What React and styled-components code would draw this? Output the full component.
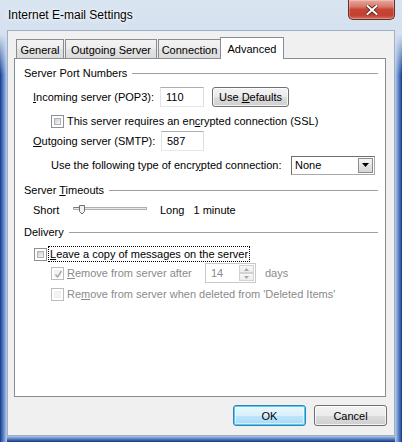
import React from 'react';
import styled, { createGlobalStyle, css } from 'styled-components';

const GlobalStyle = createGlobalStyle`
  html, body { margin: 0; padding: 0; background: #3b63ad; }
  body { font-family: "Liberation Sans", Arial, sans-serif; font-size: 11px; color: #000; }
  #root { width: 402px; height: 442px; }
  * { box-sizing: border-box; }
`;

const Window = styled.div`
  width: 402px;
  height: 442px;
  display: flex;
  flex-direction: column;
  padding: 0 7px 6px 7px;
  background:
    linear-gradient(to bottom, #d9e4f1 0, #d5e1ef 34px, rgba(213,225,239,0) 75px),
    linear-gradient(to right, #17346e 0, #2e55a3 1px, #4f78c0 3px, #86a7d8 5px, #b9cbe4 7px) left top / 7px 100% no-repeat,
    linear-gradient(to left, #17346e 0, #2e55a3 1px, #4f78c0 3px, #86a7d8 5px, #b9cbe4 7px) right top / 7px 100% no-repeat,
    linear-gradient(to top, #1b3a77 0, #3c64b0 2px, #7497cf 4px, #b0c5e3 6px) left bottom / 100% 6px no-repeat,
    radial-gradient(ellipse 70px 12px at 230px 18px, rgba(110,140,185,0.35), rgba(110,140,185,0)),
    radial-gradient(ellipse 60px 10px at 300px 16px, rgba(110,140,185,0.3), rgba(110,140,185,0)),
    #cbd9ea;
`;

const TitleBar = styled.div`
  height: 30px;
  flex: none;
  display: flex;
  align-items: flex-start;
  justify-content: space-between;
`;

const Title = styled.div`
  font-size: 12px;
  line-height: 14px;
  padding: 8px 0 0 1px;
  color: #000;
  text-shadow: 0 0 6px #fff, 0 0 3px #fff;
`;

const CloseButton = styled.div`
  width: 47px;
  height: 20px;
  display: flex;
  align-items: center;
  justify-content: center;
  border: 1px solid #6a2a25;
  border-top: none;
  border-radius: 0 0 5px 5px;
  background: linear-gradient(to bottom, #e9a99c 0, #d7786a 35%, #c74533 50%, #c1402f 80%, #d0715f 100%);
  box-shadow: inset 0 0 0 1px rgba(255,255,255,0.25);
`;

const Client = styled.div`
  flex: 1;
  display: flex;
  flex-direction: column;
  background: #f0f0f0;
  border: 1px solid #9fb0c6;
  padding: 6px 8px 9px 6px;
`;

const TabStrip = styled.div`
  height: 21px;
  flex: none;
  display: flex;
  align-items: flex-end;
  padding-left: 2px;
  gap: 1px;
`;

const Tab = styled.div`
  position: relative;
  width: ${p => p.$w}px;
  height: 19px;
  border: 1px solid #898c95;
  border-bottom: none;
  background: linear-gradient(to bottom, #f3f3f3 0, #ececec 50%, #e3e3e3 51%, #dcdcdc 100%);
  display: flex;
  align-items: center;
  justify-content: center;
  padding-top: 2px;
  white-space: nowrap;
  ${p => p.$active && css`
    height: 22px;
    margin: 0 -1px -1px -2px;
    padding-top: 0;
    background: #fff;
    z-index: 1;
  `}
`;

const Panel = styled.div`
  flex: 1;
  background: #fff;
  border: 1px solid #898c95;
  padding: 7px 7px 0 9px;
  display: flex;
  flex-direction: column;
`;

const GroupHeading = styled.div`
  display: flex;
  align-items: center;
  height: 14px;
  line-height: 14px;
  margin-top: ${p => p.$mt || 0}px;
  white-space: nowrap;
  &::after {
    content: "";
    flex: 1;
    height: 1px;
    margin-left: 5px;
    background: #a0a0a0;
  }
`;

const Row = styled.div`
  display: flex;
  align-items: center;
  height: ${p => p.$h || 14}px;
  margin-top: ${p => p.$mt || 0}px;
  padding-left: ${p => p.$indent || 0}px;
  white-space: nowrap;
  line-height: 14px;
`;

const Label = styled.span`
  flex: none;
  width: ${p => (p.$w ? `${p.$w}px` : 'auto')};
  margin-left: ${p => p.$ml || 0}px;
  color: ${p => (p.$disabled ? '#8a8a8a' : '#000')};
`;

const Accel = styled.span`
  text-decoration: underline;
  text-underline-offset: 1px;
`;

const TextBox = styled.div`
  flex: none;
  width: ${p => p.$w}px;
  height: 20px;
  border: 1px solid;
  border-color: #abadb3 #dbdfe6 #e3e9ef #e2e3ea;
  background: #fff;
  padding: 0 5px;
  display: flex;
  align-items: center;
`;

const PushButton = styled.div`
  flex: none;
  width: ${p => p.$w}px;
  height: ${p => p.$h || 20}px;
  margin-left: ${p => p.$ml || 0}px;
  border: 1px solid #707070;
  border-radius: 3px;
  display: flex;
  align-items: center;
  justify-content: center;
  background: linear-gradient(to bottom, #f2f2f2 0, #ebebeb 50%, #dddddd 51%, #cfcfcf 100%);
  box-shadow: inset 0 0 0 1px rgba(255,255,255,0.75);
  ${p => p.$default && css`
    border-color: #3c7fb1;
    background: linear-gradient(to bottom, #eaf6fd 0, #d9f0fc 50%, #bee6fd 51%, #a7d9f5 100%);
    box-shadow: inset 0 0 0 1px #48d0f6, inset 0 0 0 2px rgba(255,255,255,0.5);
  `}
`;

const CheckBox = styled.span`
  flex: none;
  position: relative;
  width: 13px;
  height: 13px;
  border: 1px solid ${p => (p.$disabled ? '#bcbcbc' : '#8e8f8f')};
  background: #fff;
  &::before {
    content: "";
    position: absolute;
    inset: 2px;
    background: ${p => (p.$disabled
      ? '#f4f4f4'
      : 'linear-gradient(135deg, #cbcfd5 0, #e6e8ea 60%, #f7f7f7 100%)')};
    border: 1px solid ${p => (p.$disabled ? '#f0f0f0' : '#aeb3b9')};
  }
`;

const CheckMark = styled.svg`
  position: absolute;
  left: 1px;
  top: 1px;
`;

const FocusLabel = styled.span`
  margin-left: 1px;
  padding: 0 1px 0 1px;
  border: 1px dotted #000;
  height: 16px;
  line-height: 14px;
`;

const ComboBox = styled.div`
  flex: none;
  width: 84px;
  height: 19px;
  border: 1px solid;
  border-color: #6e6e6e #a8a8a8 #a8a8a8 #6e6e6e;
  background: #fff;
  display: flex;
  align-items: center;
  justify-content: space-between;
  padding: 1px 1px 1px 3px;
`;

const ComboArrow = styled.div`
  width: 15px;
  height: 15px;
  border: 1px solid #8c8c8c;
  background: linear-gradient(to bottom, #f6f6f6 0, #e4e4e4 50%, #d6d6d6 100%);
  display: flex;
  align-items: center;
  justify-content: center;
`;

const SpinBox = styled.div`
  flex: none;
  width: 51px;
  height: 20px;
  border: 1px solid #c9c9c9;
  background: #fff;
  display: flex;
  align-items: stretch;
  color: #8a8a8a;
`;

const SpinText = styled.div`
  flex: 1;
  display: flex;
  align-items: center;
  padding-left: 5px;
`;

const SpinButtons = styled.div`
  width: 16px;
  display: flex;
  flex-direction: column;
  padding: 1px 1px 1px 0;
`;

const SpinButton = styled.div`
  flex: 1;
  border: 1px solid #d2d2d2;
  background: linear-gradient(to bottom, #f7f7f7, #ececec);
  display: flex;
  align-items: center;
  justify-content: center;
`;

const Slider = styled.svg`
  flex: none;
  display: block;
`;

const Footer = styled.div`
  flex: none;
  display: flex;
  justify-content: flex-end;
  gap: 8px;
  margin: 8px -1px 0 0;
`;

function Check({ disabled, checked }) {
  return (
    <CheckBox $disabled={disabled}>
      {checked && (
        <CheckMark width="11" height="11" viewBox="0 0 11 11">
          <path d="M2.5 5.5 L4.5 8 L8.5 2" fill="none" stroke="#a8a8a8" strokeWidth="1.4" />
        </CheckMark>
      )}
    </CheckBox>
  );
}

export default function App() {
  return (
    <>
      <GlobalStyle />
      <Window>
        <TitleBar>
          <Title>Internet E-mail Settings</Title>
          <CloseButton>
            <svg width="12" height="10" viewBox="0 0 12 10">
              <path d="M1.5 1 L10.5 9 M10.5 1 L1.5 9" stroke="#4a1d1a" strokeWidth="3.6" strokeLinecap="square" />
              <path d="M1.5 1 L10.5 9 M10.5 1 L1.5 9" stroke="#ffffff" strokeWidth="2" strokeLinecap="square" />
            </svg>
          </CloseButton>
        </TitleBar>
        <Client>
          <TabStrip>
            <Tab $w={48}>General</Tab>
            <Tab $w={92}>Outgoing Server</Tab>
            <Tab $w={63}>Connection</Tab>
            <Tab $w={64} $active>Advanced</Tab>
          </TabStrip>
          <Panel>
            <GroupHeading><span>Server Port Numbers</span></GroupHeading>
            <Row $mt={7} $h={20} $indent={9}>
              <Label $w={127}><Accel>I</Accel>ncoming server (POP3):</Label>
              <TextBox $w={44}>110</TextBox>
              <PushButton $w={77} $ml={8}>Use&nbsp;<Accel>D</Accel>efaults</PushButton>
            </Row>
            <Row $mt={7} $indent={27}>
              <Check />
              <Label $ml={3}>This server requires an en<Accel>c</Accel>rypted connection (SSL)</Label>
            </Row>
            <Row $mt={3} $h={20} $indent={9}>
              <Label $w={128}><Accel>O</Accel>utgoing server (SMTP):</Label>
              <TextBox $w={43}>587</TextBox>
            </Row>
            <Row $mt={4} $h={20} $indent={27}>
              <Label $w={240}>Use the following type of encr<Accel>y</Accel>pted connection:</Label>
              <ComboBox>
                <span>None</span>
                <ComboArrow>
                  <svg width="7" height="4" viewBox="0 0 7 4"><path d="M0 0 H7 L3.5 4 Z" fill="#000" /></svg>
                </ComboArrow>
              </ComboBox>
            </Row>
            <GroupHeading $mt={8}><span>Server <Accel>T</Accel>imeouts</span></GroupHeading>
            <Row $mt={6} $indent={9}>
              <Label $w={40}>Short</Label>
              <Slider width="87" height="14" viewBox="0 0 87 14">
                <rect x="0.5" y="4.5" width="73" height="2" fill="#e7eaea" stroke="#b0b0b0" />
                <path d="M0.5 4.5 H6" stroke="#7a7a7a" />
                <path d="M6.5 2.5 H11.5 V8.5 L9 11 L6.5 8.5 Z" fill="#f2f2f2" stroke="#6f6f6f" />
              </Slider>
              <Label>Long</Label>
              <Label $ml={9}>1 minute</Label>
            </Row>
            <GroupHeading $mt={8}><span>Delivery</span></GroupHeading>
            <Row $mt={7} $h={16} $indent={10}>
              <Check />
              <FocusLabel><Accel>L</Accel>eave a copy of messages on the server</FocusLabel>
            </Row>
            <Row $mt={1} $h={20} $indent={27}>
              <Check disabled checked />
              <Label $ml={3} $w={138} $disabled><Accel>R</Accel>emove from server after</Label>
              <SpinBox>
                <SpinText>14</SpinText>
                <SpinButtons>
                  <SpinButton>
                    <svg width="5" height="3" viewBox="0 0 5 3"><path d="M0 3 H5 L2.5 0 Z" fill="#a8a8a8" /></svg>
                  </SpinButton>
                  <SpinButton>
                    <svg width="5" height="3" viewBox="0 0 5 3"><path d="M0 0 H5 L2.5 3 Z" fill="#a8a8a8" /></svg>
                  </SpinButton>
                </SpinButtons>
              </SpinBox>
              <Label $ml={9} $disabled>days</Label>
            </Row>
            <Row $mt={4} $indent={27}>
              <Check disabled />
              <Label $ml={3} $disabled>Re<Accel>m</Accel>ove from server when deleted from 'Deleted Items'</Label>
            </Row>
          </Panel>
          <Footer>
            <PushButton $w={73} $h={21} $default>OK</PushButton>
            <PushButton $w={73} $h={21}>Cancel</PushButton>
          </Footer>
        </Client>
      </Window>
    </>
  );
}
